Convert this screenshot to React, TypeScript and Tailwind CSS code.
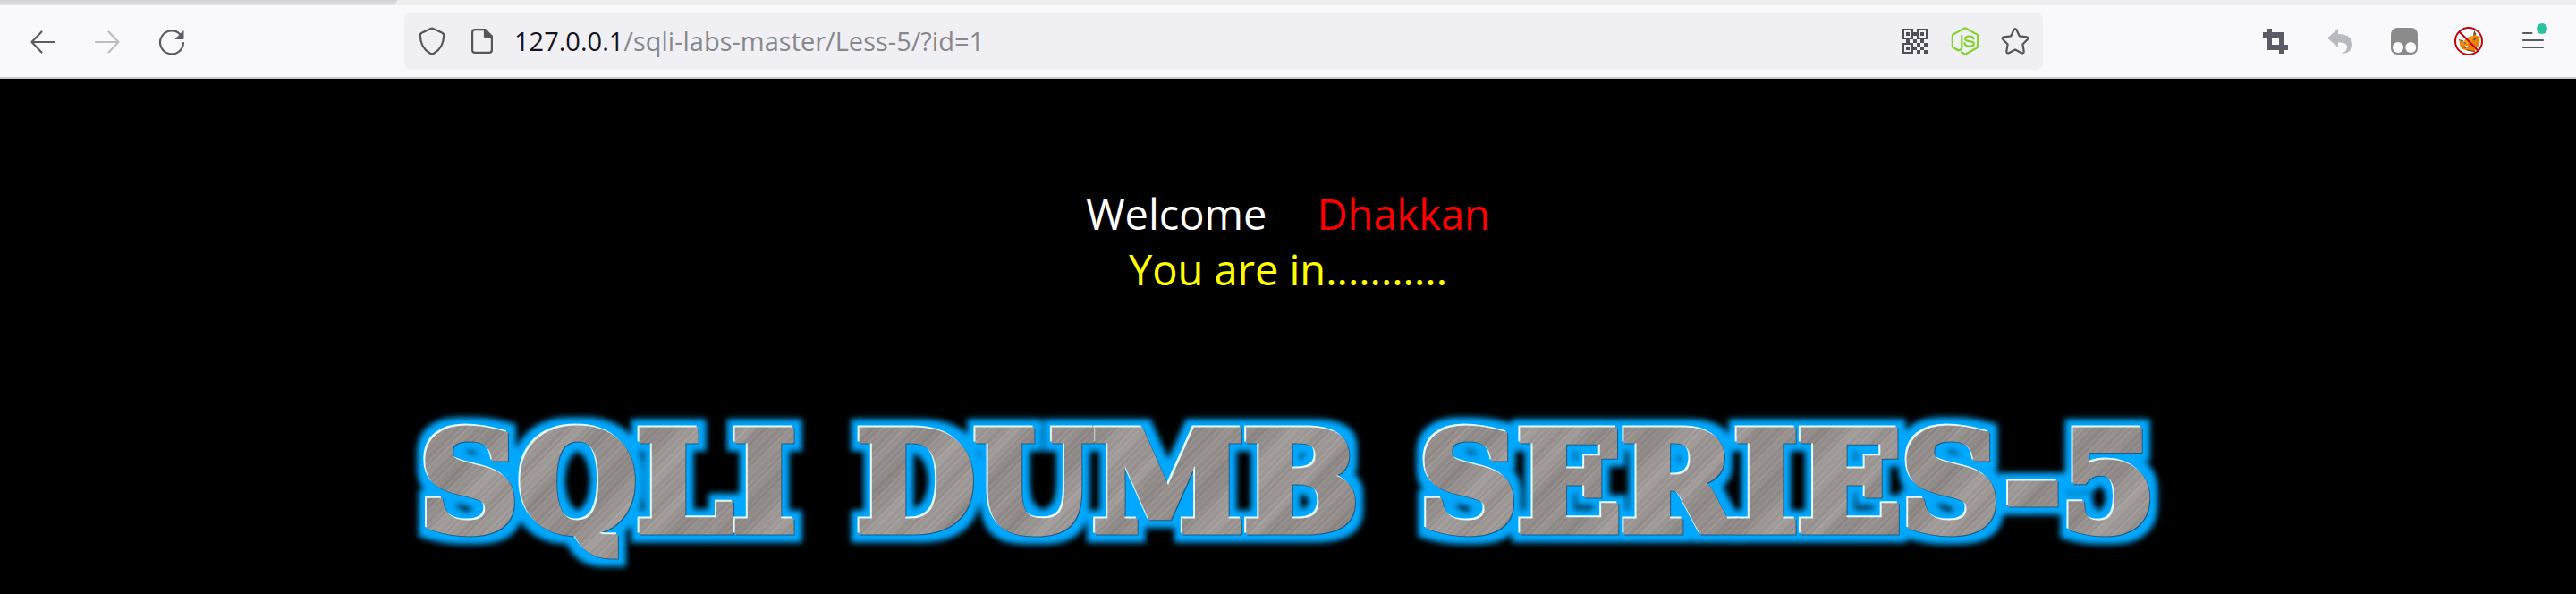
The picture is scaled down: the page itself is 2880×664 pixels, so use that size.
import type { ReactNode } from "react";

function IconButton({ label, wide, disabled, children }: { label: string; wide?: boolean; disabled?: boolean; children: ReactNode }) {
  return (
    <button
      type="button"
      aria-label={label}
      disabled={disabled}
      className={wide ? "flex h-16 w-16 shrink-0 items-center justify-center" : "flex h-16 w-14 shrink-0 items-center justify-center"}
    >
      {children}
    </button>
  );
}

const stroke = { fill: "none", strokeLinecap: "round", strokeLinejoin: "round" } as const;

function BackIcon() {
  return (
    <svg className="size-8" viewBox="0 0 32 32" {...stroke} stroke="#5b5b66" strokeWidth="2.2">
      <path d="M29 17H3.5M14.5 5.500L3.500 17L14.500 28.500" />
    </svg>
  );
}

function ForwardIcon() {
  return (
    <svg className="size-8" viewBox="0 0 32 32" {...stroke} stroke="#bdbdc1" strokeWidth="2.2">
      <path d="M3 17H28.500M17.500 5.500L28.500 17L17.500 28.500" />
    </svg>
  );
}

function ReloadIcon() {
  return (
    <svg className="size-8" viewBox="0 0 32 32" {...stroke} stroke="#5b5b66" strokeWidth="2.2">
      <path d="M29 18A13 13 0 1 1 25.500 8.500" />
      <path d="M29 5V13.500H20.500Z" fill="#5b5b66" strokeWidth="1" />
    </svg>
  );
}

function ShieldIcon() {
  return (
    <svg className="size-8" viewBox="0 0 32 32" {...stroke} stroke="#55555a" strokeWidth="2.2">
      <path d="M14.500 2Q16 1.200 17.500 2L27.500 6.800Q29.300 7.800 29.200 9.500C29 18 26.500 25 18 29.800Q16 31 14 29.800C5.500 25 3 18 2.800 9.500Q2.700 7.800 4.500 6.800Z" />
    </svg>
  );
}

function PageIcon() {
  return (
    <svg className="size-8" viewBox="0 0 32 32" {...stroke} stroke="#55555a" strokeWidth="2.2">
      <path d="M8 3.100H19.500L26.900 10.500V26Q26.900 28.900 24 28.900H8Q5.100 28.900 5.100 26V6Q5.100 3.100 8 3.100Z" />
      <path d="M19 3.500V11H26.500Z" fill="#55555a" />
    </svg>
  );
}

function QrIcon() {
  return (
    <svg className="size-8" viewBox="0 0 32 32" fill="#4f4f55" shapeRendering="crispEdges">
      {[[2, 2], [18, 2], [2, 18]].map(([x, y]) => (
        <g key={`${x}-${y}`}>
          <path fillRule="evenodd" d={`M${x} ${y}h12v12h-12zM${x + 2} ${y + 2}v8h8v-8z`} />
          <rect x={x + 4} y={y + 4} width="4" height="4" />
        </g>
      ))}
      <path d="M14 6h4v4h-4zM6 14h4v4h-4zM14 14h4v4h-4zM22 14h4v4h-4zM18 18h4v4h-4zM26 18h4v4h-4zM14 22h4v4h-4zM22 22h4v4h-4zM18 26h4v4h-4zM26 26h4v4h-4z" />
    </svg>
  );
}

function NodeIcon() {
  return (
    <svg className="size-8" viewBox="0 0 32 32" {...stroke} stroke="#83d32b" strokeWidth="2.200">
      <path d="M8.500 26.200L2.800 23.200Q1.800 22.600 1.800 21.500V10Q1.800 9 2.800 8.400L15 1.700Q16 1.200 17 1.700L29.200 8.400Q30.200 9 30.200 10V21.800Q30.200 22.900 29.200 23.500L17 30.200Q16 30.700 15 30.200L12 28.500" />
      <path d="M12.300 10V22.500Q12.300 26.300 8.500 26.200L5.500 25" />
      <path d="M25.500 13.500C25.500 10.800 23 10.500 20.700 10.500C18 10.500 16 11.300 16 13.200C16 15.500 18.300 15.800 20.800 16.100C23.500 16.400 25.800 16.800 25.800 18.900C25.800 21.200 23.500 21.700 20.800 21.700C17.800 21.700 15.600 20.800 15.500 18.300" />
    </svg>
  );
}

function StarIcon() {
  return (
    <svg className="size-8" viewBox="0 0 32 32" {...stroke} stroke="#55555a" strokeWidth="2.200">
      <path d="M14.500 3.200Q16 .8 17.500 3.200L20.700 10.300L28.700 11.300Q31.500 12 29.600 14.200L24.400 19.600L25.700 27.200Q25.800 30.200 23 29.200L16 25.600L9 29.200Q6.200 30.200 6.300 27.200L7.600 19.600L2.400 14.200Q.5 12 3.300 11.300L11.300 10.300Z" />
    </svg>
  );
}

function CropIcon() {
  return (
    <svg className="size-8" viewBox="0 0 32 32" fill="#5b5b66" shapeRendering="crispEdges">
      <path fillRule="evenodd" d="M6 2H12V6H26V20H30V26H26V30H20V26H6V12H2V6H6ZM12 12V20H20V12Z" />
    </svg>
  );
}

function UndoIcon() {
  return (
    <svg className="size-8" viewBox="0 0 32 32" fill="#b9b9c0">
      <path d="M14 2V8C24 8 30 12 30 20C30 26 25 30 17.500 30C22 28 24 26 24 22.500C24 18.500 20.500 17.500 14 17.500V23L2 12.500Z" />
    </svg>
  );
}

function MonkeyIcon() {
  return (
    <svg className="size-8" viewBox="0 0 32 32">
      <rect x="0.500" y="0.500" width="31" height="31" rx="8" fill="#fff" />
      <rect x="1" y="1" width="30" height="30" rx="7" fill="#8b8b8b" />
      <circle cx="9" cy="23" r="6" fill="#fff" />
      <circle cx="23.300" cy="23" r="6" fill="#fff" />
    </svg>
  );
}

function FoxIcon() {
  return (
    <svg className="size-8" viewBox="0 0 32 32">
      <circle cx="16" cy="16" r="15" fill="#fff" />
      <path d="M5.500 15L10.500 16.500L14.500 12L21 10L22.500 5.500L24.500 10L28.500 10.500L28 20L24 25L23 28L14 26.500L8 24.500L6 20Z" fill="#e98306" />
      <path d="M14.500 12L21 10L20 17L12 20L6 20L10.500 16.500Z" fill="#f39a1c" />
      <path d="M5 14.500L10 16M21.500 9.500L22.500 5.500L24 9M10.500 18L13 18.500M21 15L25 12.500M9 22.500L13 23.500L17 22M14 26L23 27.500" stroke="#5c4a3a" strokeWidth="1.100" fill="none" />
      <path d="M12 21.500L15 21L15.500 23L13 23.500Z" fill="#fff" />
      <circle cx="16" cy="16" r="15" fill="none" stroke="#c8000b" strokeWidth="2" />
      <path d="M5.500 5.500L26.500 26.500" stroke="#c8000b" strokeWidth="2" />
    </svg>
  );
}

function MenuIcon() {
  return (
    <span className="relative flex">
      <svg className="size-8" viewBox="0 0 32 32" {...stroke} stroke="#5b5b66" strokeWidth="2.200">
        <path d="M5 7H14.500M5 15H27M5 23H27" />
      </svg>
      <span className="absolute -top-1 right-0 size-3 rounded-full bg-[#2ac3a2]" />
    </span>
  );
}

function Toolbar() {
  return (
    <header>
      <div className="h-[6px] bg-[#efefef]">
        <div className="h-full w-[444px] rounded-br-lg bg-linear-to-b from-[#cfcfcf] to-[#e6e6e6]" />
      </div>
      <div className="flex h-[82px] items-center border-b-2 border-[#cccccc] bg-[#f9f9fb] px-4">
        <nav aria-label="History" className="flex gap-2">
          <IconButton label="Back" wide><BackIcon /></IconButton>
          <IconButton label="Forward" wide disabled><ForwardIcon /></IconButton>
          <IconButton label="Reload" wide><ReloadIcon /></IconButton>
        </nav>
        <div className="mx-57 flex h-16 min-w-0 flex-1 items-center rounded-lg bg-[#f0f0f4] px-[3px]">
          <IconButton label="Tracking protection"><ShieldIcon /></IconButton>
          <IconButton label="Site information"><PageIcon /></IconButton>
          <a href="#" className="min-w-0 flex-1 truncate pl-2 font-['Open_Sans',sans-serif] text-[29px] leading-10 text-[#88888d]">
            <span className="text-[#15141a]">127.0.0.1</span>/sqli-labs-master/Less-5/?id=1
          </a>
          <IconButton label="QR code"><QrIcon /></IconButton>
          <IconButton label="Node.js"><NodeIcon /></IconButton>
          <IconButton label="Bookmark this page"><StarIcon /></IconButton>
        </div>
        <nav aria-label="Extensions" className="flex gap-2">
          <IconButton label="Crop" wide><CropIcon /></IconButton>
          <IconButton label="Undo" wide><UndoIcon /></IconButton>
          <IconButton label="Userscripts" wide><MonkeyIcon /></IconButton>
          <IconButton label="Proxy" wide><FoxIcon /></IconButton>
          <IconButton label="Menu" wide><MenuIcon /></IconButton>
        </nav>
      </div>
    </header>
  );
}

function BannerFilter() {
  return (
    <svg className="absolute size-0" aria-hidden="true">
      <filter id="steel-glow" x="-5%" y="-20%" width="110%" height="140%" colorInterpolationFilters="sRGB">
        <feMorphology in="SourceAlpha" operator="dilate" radius="9" result="wide" />
        <feGaussianBlur in="wide" stdDeviation="3" result="soft" />
        <feFlood floodColor="#00a8ff" />
        <feComposite in2="soft" operator="in" result="glow" />
        <feOffset in="SourceAlpha" dx="-2" dy="-2" result="up" />
        <feFlood floodColor="#e6fbff" />
        <feComposite in2="up" operator="in" result="light" />
        <feOffset in="SourceAlpha" dx="1" dy="1" result="down" />
        <feFlood floodColor="#24587c" />
        <feComposite in2="down" operator="in" result="dark" />
        <feMerge>
          <feMergeNode in="glow" />
          <feMergeNode in="dark" />
          <feMergeNode in="light" />
          <feMergeNode in="SourceGraphic" />
        </feMerge>
      </filter>
    </svg>
  );
}

const STEEL =
  "bg-clip-text text-transparent [-webkit-text-stroke:9px_transparent] bg-[repeating-linear-gradient(132deg,#ffffff00_0px,#ffffff18_17px,#00000010_31px,#ffffff00_59px,#00000012_83px,#ffffff1c_113px,#ffffff00_137px),repeating-linear-gradient(135deg,#928d8b_0px,#9f9a97_2px,#8e8987_4px,#a29d9a_7px,#95908e_9px,#9d9895_13px,#918c8a_15px,#928d8b_17px)]";

export default function App() {
  return (
    <div className="flex min-h-screen flex-col bg-black">
      <Toolbar />
      <main className="flex flex-1 flex-col items-center bg-black pt-[120px] font-['Open_Sans',sans-serif] text-[47px] leading-[62px]">
        <p className="flex gap-14 text-white">
          <span>Welcome</span>
          <span className="text-[#ff0000]">Dhakkan</span>
        </p>
        <p className="text-[#ffff00]">You are in...........</p>
        <BannerFilter />
        <h1 className="mt-[118px] flex gap-17 font-['DejaVu_Serif',serif] text-[152px] leading-[180px] font-bold whitespace-nowrap [filter:url(#steel-glow)]">
          <span className={STEEL}>SQLI</span>
          <span className={STEEL}>DUMB</span>
          <span className={STEEL}>SERIES-5</span>
        </h1>
      </main>
    </div>
  );
}
